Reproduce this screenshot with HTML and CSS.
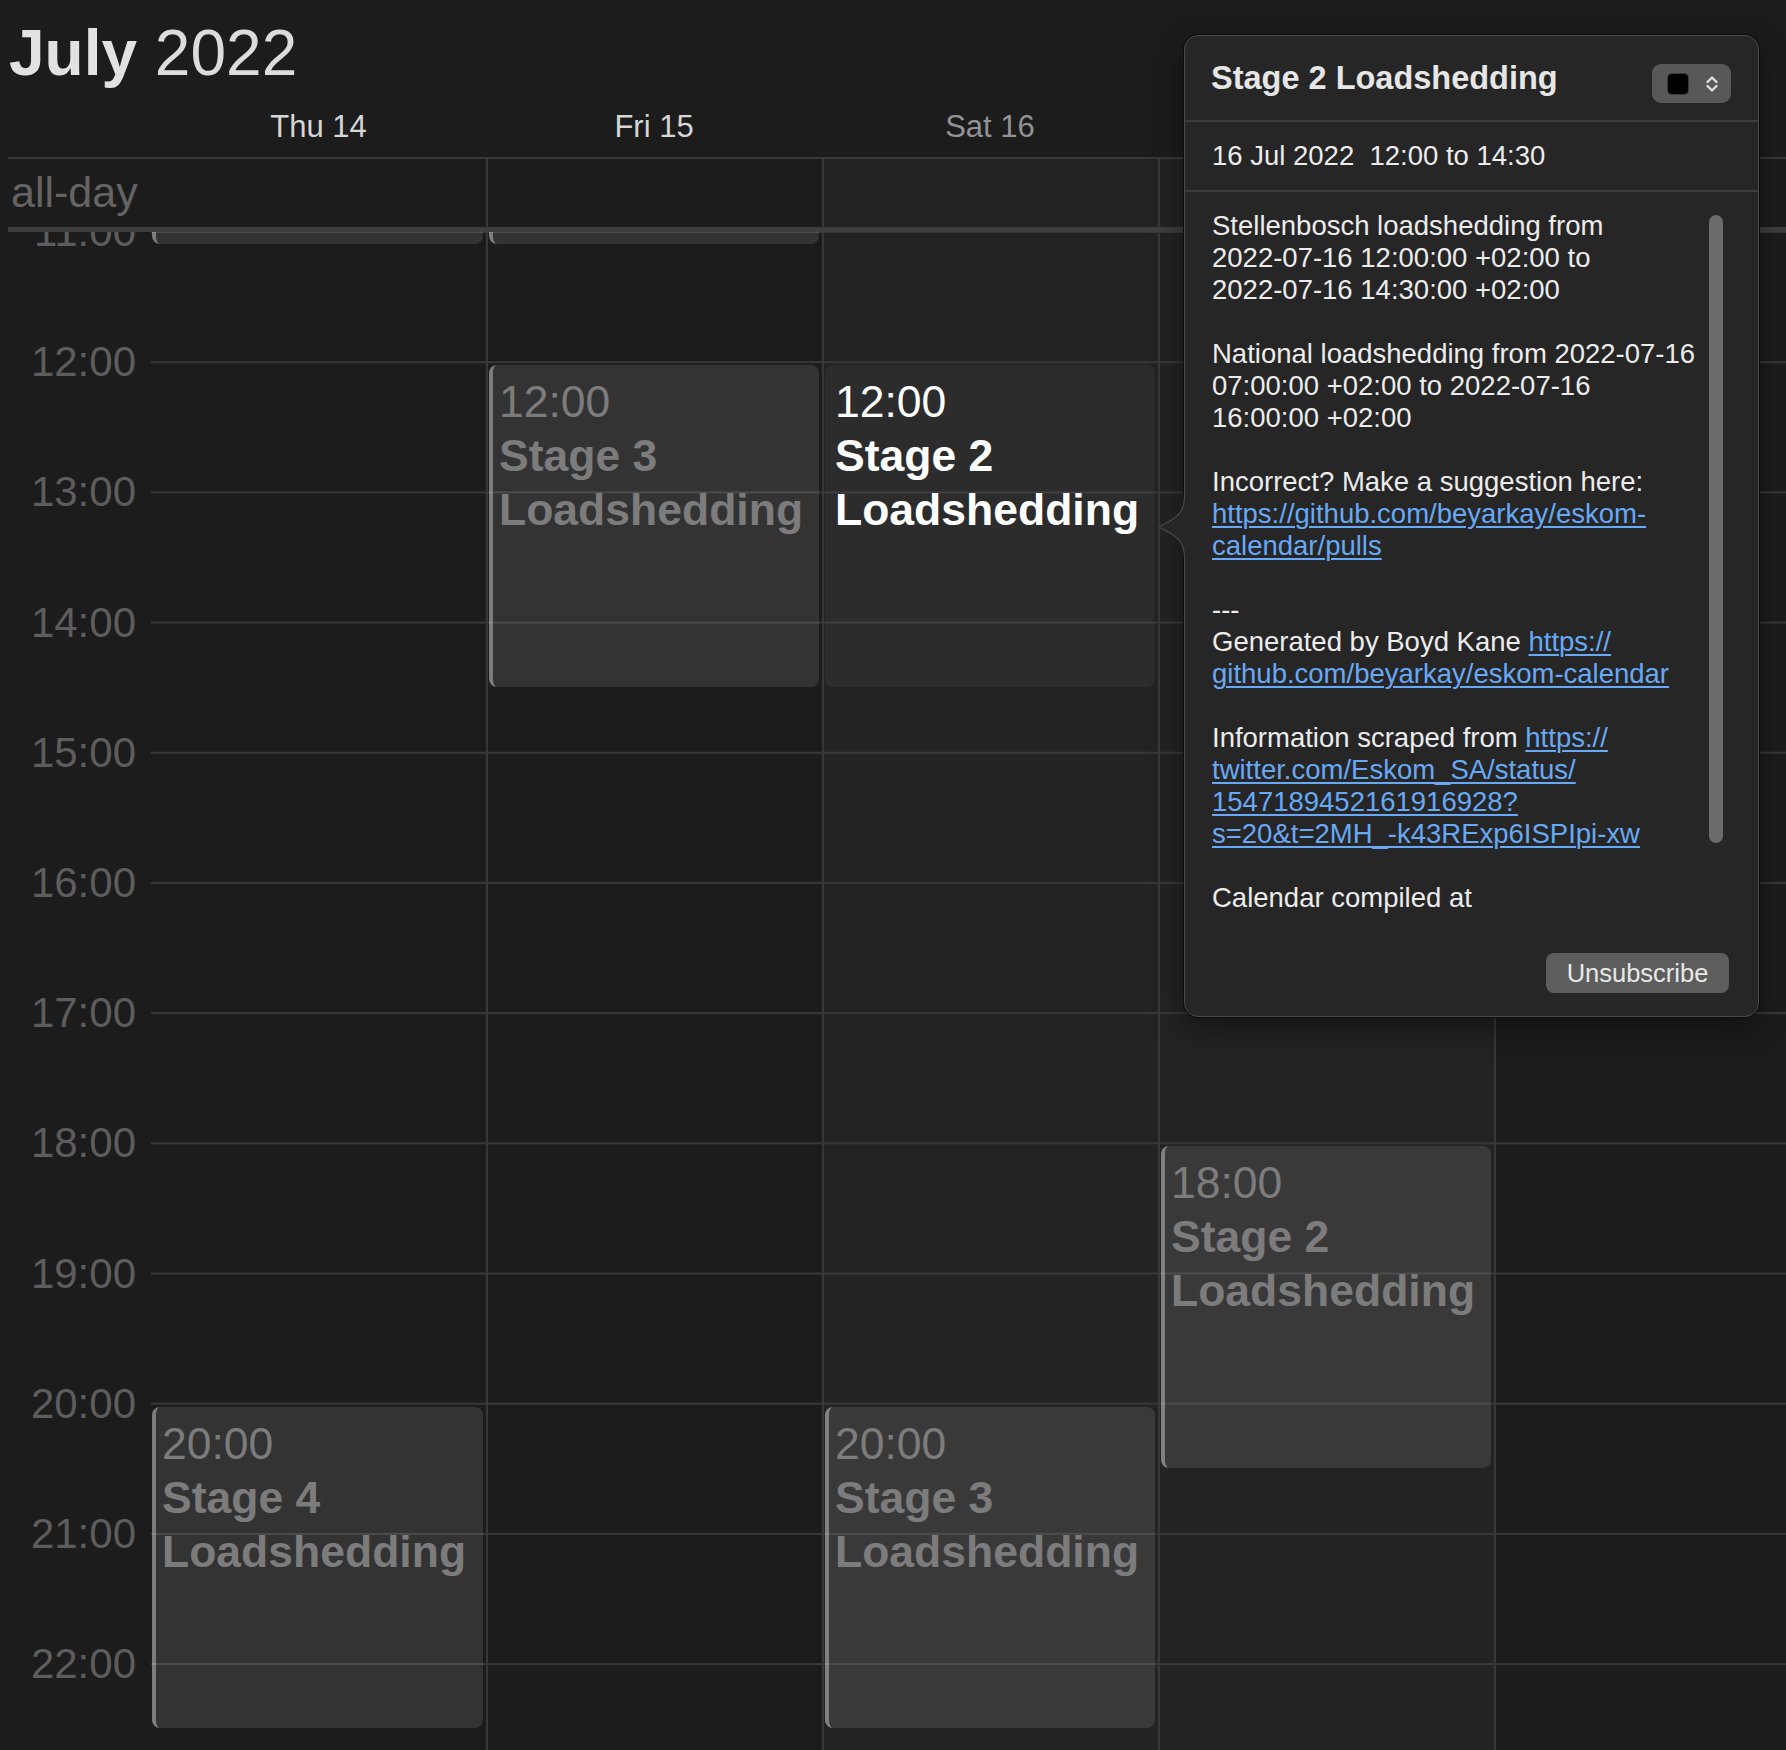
FILE: index.html
```html
<!DOCTYPE html>
<html lang="en">
<head>
<meta charset="utf-8">
<title>Calendar – July 2022</title>
<link rel="stylesheet" href="styles.css">
</head>
<body>
<div class="cal">
  <header class="top">
    <h1 class="month"><b>July</b> 2022</h1>
    <div class="days">
      <div class="gut"></div>
      <div class="day first">Thu 14</div>
      <div class="day">Fri 15</div>
      <div class="day wkend">Sat 16</div>
      <div class="day wkend">Sun 17</div>
      <div class="day">Mon 18</div>
    </div>
  </header>

  <div class="allday">
    <div class="gut adlabel">all-day</div>
    <div class="adcol first"></div>
    <div class="adcol"></div>
    <div class="adcol we"></div>
    <div class="adcol we"></div>
    <div class="adcol"></div>
  </div>

  <div class="sep"></div>

  <div class="grid">
    <div class="hours">
      <div class="hr"><span>11:00</span></div>
      <div class="hr"><span>12:00</span></div>
      <div class="hr"><span>13:00</span></div>
      <div class="hr"><span>14:00</span></div>
      <div class="hr"><span>15:00</span></div>
      <div class="hr"><span>16:00</span></div>
      <div class="hr"><span>17:00</span></div>
      <div class="hr"><span>18:00</span></div>
      <div class="hr"><span>19:00</span></div>
      <div class="hr"><span>20:00</span></div>
      <div class="hr"><span>21:00</span></div>
      <div class="hr"><span>22:00</span></div>
    </div>

    <div class="col first">
      <div class="ev" style="top:-120px;height:132px"></div>
      <div class="ev" style="top:1174.8px;height:321.5px">
        <div class="ev-time">20:00</div>
        <div class="ev-name">Stage 4 Loadshedding</div>
      </div>
    </div>

    <div class="col">
      <div class="ev" style="top:-120px;height:132px"></div>
      <div class="ev" style="top:133.2px;height:321.5px">
        <div class="ev-time">12:00</div>
        <div class="ev-name">Stage 3 Loadshedding</div>
      </div>
    </div>

    <div class="col we">
      <div class="ev sel" style="top:133.2px;height:321.5px">
        <div class="ev-time">12:00</div>
        <div class="ev-name">Stage 2 Loadshedding</div>
      </div>
      <div class="ev" style="top:1174.8px;height:321.5px">
        <div class="ev-time">20:00</div>
        <div class="ev-name">Stage 3 Loadshedding</div>
      </div>
    </div>

    <div class="col we">
      <div class="ev" style="top:914.4px;height:321.5px">
        <div class="ev-time">18:00</div>
        <div class="ev-name">Stage 2 Loadshedding</div>
      </div>
    </div>

    <div class="col"></div>
  </div>
</div>

<div class="pop">
  <svg class="pop-arrow" width="30" height="64" viewBox="0 0 30 64" aria-hidden="true">
    <path d="M26.5 0 C26.5 14 22 20 12 26 L2.6 31 Q0.6 32 2.6 33 L12 38 C22 44 26.5 50 26.5 64 L30 64 L30 0 Z" fill="#262626"/>
    <path d="M26.5 0 C26.5 14 22 20 12 26 L2.6 31 Q0.6 32 2.6 33 L12 38 C22 44 26.5 50 26.5 64" fill="none" stroke="#4a4a4a" stroke-width="1.2"/>
  </svg>

  <div class="pop-head">
    <div class="pop-title">Stage 2 Loadshedding</div>
    <div class="swatch">
      <span class="sq"></span>
      <svg class="chev" width="14" height="20" viewBox="0 0 14 20" aria-hidden="true">
        <polyline points="2.5,8 7,3.5 11.5,8" fill="none" stroke="#e4e4e4" stroke-width="2.2" stroke-linecap="round" stroke-linejoin="round"/>
        <polyline points="2.5,12 7,16.5 11.5,12" fill="none" stroke="#e4e4e4" stroke-width="2.2" stroke-linecap="round" stroke-linejoin="round"/>
      </svg>
    </div>
  </div>

  <div class="pop-date">16 Jul 2022&nbsp;&nbsp;12:00 to 14:30</div>

  <div class="pop-body">
    <p>Stellenbosch loadshedding from<br>2022-07-16 12:00:00 +02:00 to<br>2022-07-16 14:30:00 +02:00</p>
    <p>National loadshedding from 2022-07-16<br>07:00:00 +02:00 to 2022-07-16<br>16:00:00 +02:00</p>
    <p>Incorrect? Make a suggestion here:<br><a href="#">https://github.com/beyarkay/eskom-<br>calendar/pulls</a></p>
    <p>---<br>Generated by Boyd Kane <a href="#">https://<br>github.com/beyarkay/eskom-calendar</a></p>
    <p>Information scraped from <a href="#">https://<br>twitter.com/Eskom_SA/status/<br>1547189452161916928?<br>s=20&amp;t=2MH_-k43RExp6ISPIpi-xw</a></p>
    <p>Calendar compiled at</p>
  </div>

  <div class="scrollbar"></div>

  <div class="pop-foot">
    <button class="btn" type="button">Unsubscribe</button>
  </div>
</div>
</body>
</html>
```

FILE: styles.css
```css
* { box-sizing: border-box; }

html, body {
  margin: 0;
  padding: 0;
  background: #1c1c1c;
}

body {
  width: 1786px;
  height: 1750px;
  overflow: hidden;
  position: relative;
  font-family: "Liberation Sans", Arial, sans-serif;
}

.cal {
  margin-left: 8px;
  width: 1778px;
  height: 1750px;
  overflow: hidden;
}

/* ---------- header ---------- */
.top {
  height: 159px;
  border-bottom: 2px solid #383838;
}

.month {
  margin: 0;
  padding: 15px 0 0 1px;
  height: 91px;
  font-size: 64px;
  line-height: 76px;
  font-weight: 400;
  color: #dcdcdc;
  white-space: nowrap;
}

.month b {
  font-weight: 700;
  color: #e2e2e2;
}

.days {
  display: flex;
  margin-top: 16px;
  height: 40px;
}

.gut {
  flex: 0 0 143px;
}

.day {
  flex: 0 0 336px;
  text-align: center;
  font-size: 31px;
  line-height: 40px;
  color: #d6d6d6;
  white-space: nowrap;
}

.day.first { flex-basis: 335px; }
.day.wkend { color: #929292; }

/* ---------- all-day row ---------- */
.allday {
  display: flex;
  height: 68px;
}

.adlabel {
  padding-left: 3px;
  font-size: 43px;
  line-height: 66px;
  color: #646464;
  white-space: nowrap;
}

.adcol {
  flex: 0 0 336px;
  border-left: 2px solid #383838;
}

.adcol.first {
  flex-basis: 335px;
  border-left: 0;
}

.adcol.we { background: #232323; }

.sep {
  height: 5px;
  background: #3e3e3e;
}

/* ---------- time grid ---------- */
.grid {
  display: flex;
  height: 1518px;
  overflow: hidden;
}

.hours {
  flex: 0 0 143px;
}

.hr {
  height: 130.2px;
}

.hr span {
  display: block;
  padding-right: 15px;
  text-align: right;
  font-size: 42px;
  line-height: 42px;
  color: #5d5d5d;
  transform: translateY(-50%);
}

.col {
  flex: 0 0 336px;
  position: relative;
  border-left: 2px solid #383838;
  background-color: #1c1c1c;
  background-image: linear-gradient(#383838 0, #383838 2px, transparent 2px);
  background-size: 100% 130.2px;
  background-position: 0 -1px;
}

.col.first {
  flex-basis: 335px;
  border-left: 0;
}

.col.we { background-color: #232323; }

.ev {
  position: absolute;
  left: 1px;
  right: 3px;
  border-radius: 8px;
  background: rgba(255, 255, 255, 0.1);
  border-left: 4px solid rgba(255, 255, 255, 0.36);
  padding: 10px 6px 0 6px;
  font-size: 44.5px;
  line-height: 54px;
  color: #7c7c7c;
  overflow: hidden;
}

.ev-name { font-weight: 700; }

.ev.sel {
  background: rgba(255, 255, 255, 0.045);
  border-left-color: transparent;
  color: #ffffff;
}

/* ---------- popover ---------- */
.pop {
  position: absolute;
  left: 1184px;
  top: 35px;
  width: 575px;
  height: 982px;
  background: #262626;
  border: 1px solid #4a4a4a;
  border-radius: 14px;
  box-shadow: 0 0 0 1px #0c0c0c, 0 10px 30px rgba(0, 0, 0, 0.45);
  display: flex;
  flex-direction: column;
  color: #ececec;
}

.pop-arrow {
  position: absolute;
  left: -27px;
  top: 459px;
}

.pop-head {
  height: 86px;
  flex: 0 0 86px;
  display: flex;
  justify-content: space-between;
  align-items: flex-start;
  padding: 0 27px 0 26px;
  border-bottom: 2px solid #3d3d3d;
}

.pop-title {
  margin-top: 21px;
  font-size: 32.5px;
  line-height: 42px;
  font-weight: 700;
  color: #e6e6e6;
  white-space: nowrap;
}

.swatch {
  margin-top: 28px;
  width: 79px;
  height: 39px;
  border-radius: 9px;
  background: #585858;
  display: flex;
  align-items: center;
  padding-left: 16px;
  gap: 17px;
}

.sq {
  width: 20px;
  height: 20px;
  border-radius: 4px;
  background: #000;
  box-shadow: 0 0 0 1px #3a3a3a;
}

.chev { display: block; }

.pop-date {
  flex: 0 0 70px;
  height: 70px;
  padding-left: 27px;
  border-bottom: 2px solid #3d3d3d;
  font-size: 27.5px;
  line-height: 68px;
  white-space: nowrap;
}

.pop-body {
  padding: 18px 0 0 27px;
  font-size: 27.5px;
  line-height: 32px;
  white-space: nowrap;
}

.pop-body p {
  margin: 0 0 32px;
}

.pop-body a {
  color: #68a9f5;
  text-decoration: underline;
  text-decoration-thickness: 1.5px;
  text-underline-offset: 3px;
}

.scrollbar {
  position: absolute;
  left: 524px;
  top: 179px;
  width: 14px;
  height: 628px;
  border-radius: 7px;
  background: #6b6b6b;
}

.pop-foot {
  margin-top: auto;
  display: flex;
  justify-content: flex-end;
  padding: 0 29px 23px 0;
}

.btn {
  width: 183px;
  height: 40px;
  border: 0;
  border-radius: 8px;
  background: #5d5d5d;
  color: #e8e8e8;
  font-family: "Liberation Sans", Arial, sans-serif;
  font-size: 25.5px;
  line-height: 40px;
  padding: 0;
}
```
